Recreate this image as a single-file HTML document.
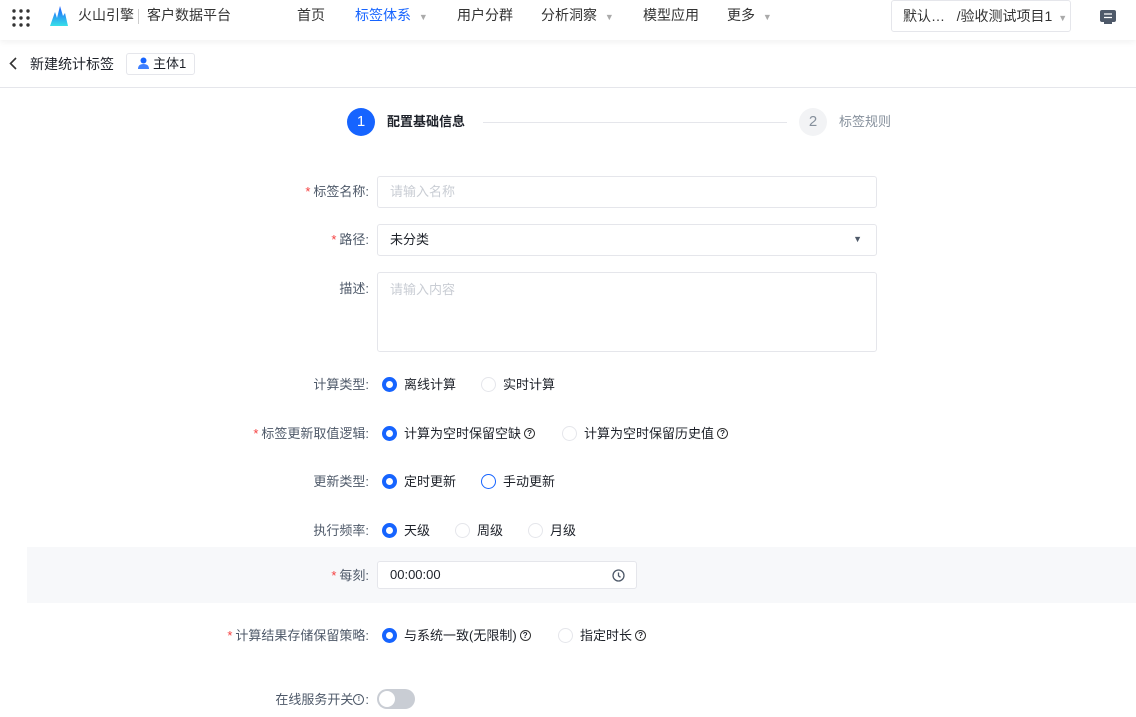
<!DOCTYPE html>
<html><head><meta charset="utf-8"><style>
*{box-sizing:border-box;margin:0;padding:0}
body{width:1136px;height:717px;overflow:hidden;background:#fff;font-family:"Liberation Sans","Noto Sans CJK SC",sans-serif;font-size:13px;color:#1d2129;position:relative}
.a{position:absolute;white-space:nowrap;line-height:16px}
.hdr{position:absolute;left:0;top:0;width:1136px;height:40px;background:#fff;box-shadow:0 2px 6px rgba(0,0,0,.06)}
.hdr .a{line-height:18px}
.lbl{position:absolute;right:767px;font-size:13px;color:#4e5969;white-space:nowrap;line-height:16px}
.lbl b{color:#f53f3f;font-weight:normal;margin-right:3px}
.inp{position:absolute;left:377px;width:500px;height:32px;border:1px solid #e5e6eb;border-radius:3px;background:#fff;padding:0 12px;line-height:29px}
.ph{color:#c9cdd4}
.r{position:absolute;width:15px;height:15px;border-radius:50%;border:1px solid #e5e6eb;background:#fff}
.r.on{border:4px solid #1664ff}
.r.bl{border:1.5px solid #1664ff}
.q{display:inline-block;width:11px;height:11px;border:1.3px solid #333;border-radius:50%;font-size:8px;line-height:9px;text-align:center;font-weight:bold;vertical-align:middle;position:relative;top:-1px;margin-left:3px}
</style></head><body>
<div class="hdr">
<svg class="a" style="left:12px;top:9px" width="18" height="18" viewBox="0 0 18 18" fill="#333"><circle cx="2" cy="2" r="1.7"/><circle cx="9" cy="2" r="1.7"/><circle cx="16" cy="2" r="1.7"/><circle cx="2" cy="9" r="1.7"/><circle cx="9" cy="9" r="1.7"/><circle cx="16" cy="9" r="1.7"/><circle cx="2" cy="16" r="1.7"/><circle cx="9" cy="16" r="1.7"/><circle cx="16" cy="16" r="1.7"/></svg>
<svg class="a" style="left:50px;top:6px" width="18" height="20" viewBox="0 0 18 20"><defs><linearGradient id="g" x1="0" y1="0" x2="0" y2="1"><stop offset="0" stop-color="#1a5cff"/><stop offset="1" stop-color="#38e0e8"/></linearGradient></defs><path d="M0 20L5 6 7 12 10 0 13 10 15 7 18 20Z" fill="url(#g)"/></svg>
<div class="a" style="left:78px;top:6px;font-size:14px;color:#333">火山引擎</div>
<div class="a" style="left:138px;top:9px;width:1px;height:15px;background:#ccc"></div>
<div class="a" style="left:147px;top:6px;font-size:14px;color:#333">客户数据平台</div>
<div class="a" style="left:297px;top:6px;font-size:14px;color:#333">首页</div>
<div class="a" style="left:355px;top:6px;font-size:14px;color:#1664ff">标签体系 <span style="color:#aaa;font-size:9px;margin-left:4px">▼</span></div>
<div class="a" style="left:457px;top:6px;font-size:14px;color:#333">用户分群</div>
<div class="a" style="left:541px;top:6px;font-size:14px;color:#333">分析洞察 <span style="color:#aaa;font-size:9px;margin-left:4px">▼</span></div>
<div class="a" style="left:643px;top:6px;font-size:14px;color:#333">模型应用</div>
<div class="a" style="left:727px;top:6px;font-size:14px;color:#333">更多 <span style="color:#aaa;font-size:9px;margin-left:4px">▼</span></div>
<div class="a" style="left:891px;top:0;width:180px;height:32px;border:1px solid #e5e6eb;border-radius:3px;padding:6px 11px;font-size:14px;color:#333">默认…&nbsp;&nbsp;&nbsp;/验收测试项目1 <span style="color:#aaa;font-size:9px;margin-left:2px">▼</span></div>
<svg class="a" style="left:1100px;top:10px" width="16" height="14" viewBox="0 0 16 14"><rect x="0" y="0" width="16" height="12" rx="2" fill="#4e5969"/><path d="M4 13h8" stroke="#4e5969" stroke-width="2"/><path d="M4 4h8M4 7.5h8" stroke="#fff" stroke-width="1.3"/></svg>
</div>
<svg class="a" style="left:9px;top:57px" width="8" height="13" viewBox="0 0 8 13"><path d="M7 1L1.5 6.5 7 12" fill="none" stroke="#333" stroke-width="1.6"/></svg>
<div class="a" style="left:30px;top:56px;font-size:14px;color:#1d2129">新建统计标签</div>
<div class="a" style="left:126px;top:53px;width:69px;height:22px;border:1px solid #e5e6eb;border-radius:3px;padding:2px 0 0 11px;font-size:13px"><svg width="11" height="12" viewBox="0 0 11 12" style="vertical-align:-1px;margin-right:4px"><circle cx="5.5" cy="3.5" r="3" fill="#1664ff"/><path d="M0 12Q0 7 5.5 7 11 7 11 12Z" fill="#4080ff"/></svg>主体1</div>
<div class="a" style="left:0;top:87px;width:1136px;height:1px;background:#e5e6eb"></div>
<div class="a" style="left:347px;top:108px;width:28px;height:28px;border-radius:50%;background:#1664ff;color:#fff;text-align:center;line-height:28px;font-size:15px">1</div>
<div class="a" style="left:387px;top:114px;font-size:13px;font-weight:bold;color:#1d2129">配置基础信息</div>
<div class="a" style="left:483px;top:122px;width:304px;height:1px;background:#e5e6eb"></div>
<div class="a" style="left:799px;top:108px;width:28px;height:28px;border-radius:50%;background:#f2f3f5;color:#86909c;text-align:center;line-height:28px;font-size:15px">2</div>
<div class="a" style="left:839px;top:114px;font-size:13px;color:#86909c">标签规则</div>

<div class="lbl" style="top:184px"><b>*</b>标签名称:</div>
<div class="inp" style="top:176px"><span class="ph">请输入名称</span></div>
<div class="lbl" style="top:232px"><b>*</b>路径:</div>
<div class="inp" style="top:224px">未分类<span style="position:absolute;right:14px;font-size:9px;color:#4e5969">▼</span></div>
<div class="lbl" style="top:281px">描述:</div>
<div class="inp" style="top:272px;height:80px;line-height:16px;padding-top:9px"><span class="ph">请输入内容</span></div>

<div class="lbl" style="top:377px">计算类型:</div>
<div class="r on" style="left:382px;top:377px"></div><div class="a" style="left:404px;top:377px">离线计算</div>
<div class="r" style="left:481px;top:377px"></div><div class="a" style="left:503px;top:377px">实时计算</div>

<div class="lbl" style="top:426px"><b>*</b>标签更新取值逻辑:</div>
<div class="r on" style="left:382px;top:426px"></div><div class="a" style="left:404px;top:426px">计算为空时保留空缺<span class="q">?</span></div>
<div class="r" style="left:562px;top:426px"></div><div class="a" style="left:584px;top:426px">计算为空时保留历史值<span class="q">?</span></div>

<div class="lbl" style="top:474px">更新类型:</div>
<div class="r on" style="left:382px;top:474px"></div><div class="a" style="left:404px;top:474px">定时更新</div>
<div class="r bl" style="left:481px;top:474px"></div><div class="a" style="left:503px;top:474px">手动更新</div>

<div class="lbl" style="top:523px">执行频率:</div>
<div class="r on" style="left:382px;top:523px"></div><div class="a" style="left:404px;top:523px">天级</div>
<div class="r" style="left:455px;top:523px"></div><div class="a" style="left:477px;top:523px">周级</div>
<div class="r" style="left:528px;top:523px"></div><div class="a" style="left:550px;top:523px">月级</div>

<div class="a" style="left:27px;top:547px;width:1109px;height:56px;background:#f7f8fa"></div>
<div class="lbl" style="top:568px"><b>*</b>每刻:</div>
<div class="inp" style="top:561px;width:260px;height:28px;line-height:26px">00:00:00<svg style="position:absolute;right:11px;top:7px" width="13" height="13" viewBox="0 0 13 13"><circle cx="6.5" cy="6.5" r="5.5" fill="none" stroke="#4e5969" stroke-width="1.3"/><path d="M6.5 3.5v3.3l2 1.5" fill="none" stroke="#4e5969" stroke-width="1.3"/></svg></div>

<div class="lbl" style="top:628px"><b>*</b>计算结果存储保留策略:</div>
<div class="r on" style="left:382px;top:628px"></div><div class="a" style="left:404px;top:628px">与系统一致(无限制)<span class="q">?</span></div>
<div class="r" style="left:558px;top:628px"></div><div class="a" style="left:580px;top:628px">指定时长<span class="q">?</span></div>

<div class="lbl" style="top:692px">在线服务开关<span class="q" style="margin:0 1px 0 0;border-color:#4e5969;color:#4e5969;font-size:7px">!</span>:</div>
<div class="a" style="left:377px;top:689px;width:38px;height:20px;border-radius:10px;background:#c9cdd4"><div style="position:absolute;left:2px;top:2px;width:16px;height:16px;border-radius:50%;background:#fff"></div></div>
</body></html>
